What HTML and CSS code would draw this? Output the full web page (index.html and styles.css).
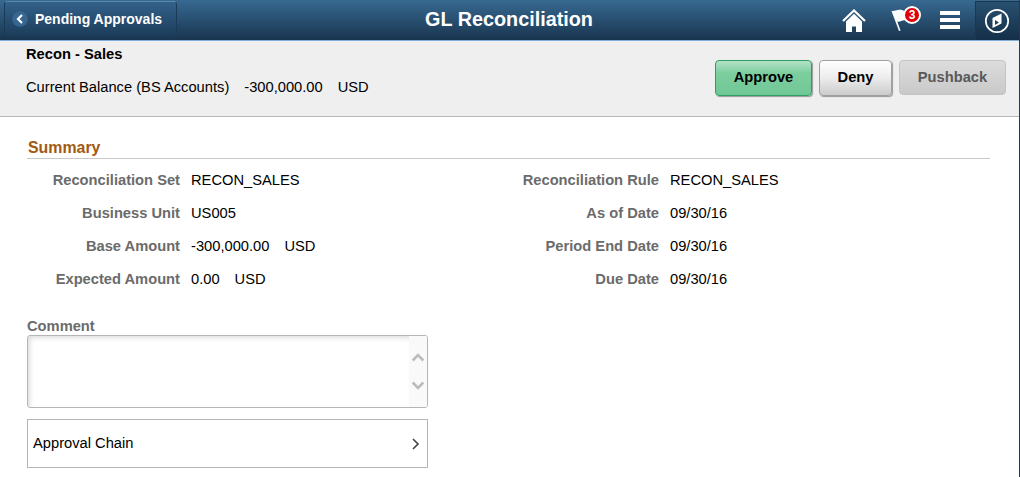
FILE: index.html
```html
<!DOCTYPE html>
<html lang="en">
<head>
    <meta charset="UTF-8">
    <meta name="viewport" content="width=device-width, initial-scale=1.0">
    <title>GL Reconciliation</title>
    <link rel="stylesheet" href="styles.css">
</head>
<body>
    <div class="page">
        <header class="banner">
            <button class="back-button">
                <svg class="back-icon" width="16" height="16" viewBox="0 0 16 16">
                    <circle cx="8" cy="8" r="7.8" fill="#376690"/>
                    <path d="M10 4 L6 8 L10 12" fill="none" stroke="#fff" stroke-width="2.2"/>
                </svg>
                <span>Pending Approvals</span>
            </button>
            <h1 class="title">GL Reconciliation</h1>
            <nav class="tools">
                <svg class="home-icon" width="24" height="24" viewBox="0 0 24 24">
                    <path d="M1 12 L12 1.5 L23 12" fill="none" stroke="#fff" stroke-width="2.2"/>
                    <path d="M4 12.5 L12 4.8 L20 12.5 V23 H14 V17.5 H10 V23 H4 Z" fill="#fff"/>
                </svg>
                <div class="alerts">
                    <svg width="20" height="24" viewBox="0 0 20 24">
                        <path d="M0.5 3 C4 3.5 6 1 11 2 L16 4 V13 C12 10.5 9 15 6.2 13.5 L9.6 22.5 L8 23 Z" fill="#fff"/>
                    </svg>
                    <span class="count">3</span>
                </div>
                <div class="menu">
                    <span class="bar"></span>
                    <span class="bar"></span>
                    <span class="bar"></span>
                </div>
                <div class="navbar-tile">
                    <svg width="26" height="26" viewBox="0 0 26 26">
                        <circle cx="13" cy="13" r="11.2" fill="none" stroke="#fff" stroke-width="1.7"/>
                        <path d="M8.5 10 L17.5 5.5 V15.5 L8.5 20 Z" fill="#fff"/>
                        <path d="M11 12 L15 14.5 L11 17 Z" fill="#1f4463"/>
                    </svg>
                </div>
            </nav>
        </header>

        <section class="subheader">
            <div class="info">
                <h2 class="name">Recon - Sales</h2>
                <p class="balance"><span>Current Balance (BS Accounts)</span><span>-300,000.00</span><span>USD</span></p>
            </div>
            <div class="actions">
                <button class="action approve">Approve</button>
                <button class="action deny">Deny</button>
                <button class="action pushback" disabled>Pushback</button>
            </div>
        </section>

        <main class="content">
            <h3 class="section-title">Summary</h3>
            <div class="summary">
                <dl class="fields">
                    <dt>Reconciliation Set</dt><dd>RECON_SALES</dd>
                    <dt>Business Unit</dt><dd>US005</dd>
                    <dt>Base Amount</dt><dd><span>-300,000.00</span><span>USD</span></dd>
                    <dt>Expected Amount</dt><dd><span>0.00</span><span>USD</span></dd>
                </dl>
                <dl class="fields">
                    <dt>Reconciliation Rule</dt><dd>RECON_SALES</dd>
                    <dt>As of Date</dt><dd>09/30/16</dd>
                    <dt>Period End Date</dt><dd>09/30/16</dd>
                    <dt>Due Date</dt><dd>09/30/16</dd>
                </dl>
            </div>

            <div class="comment-label">Comment</div>
            <div class="comment">
                <div class="comment-text"></div>
                <div class="scroller">
                    <svg width="12" height="9" viewBox="0 0 12 9"><path d="M0.7 7.5 L6 2.2 L11.3 7.5" fill="none" stroke="#bcbcbc" stroke-width="2.6"/></svg>
                    <svg width="12" height="9" viewBox="0 0 12 9"><path d="M0.7 1.5 L6 6.8 L11.3 1.5" fill="none" stroke="#bcbcbc" stroke-width="2.6"/></svg>
                </div>
            </div>

            <div class="chain">
                <span>Approval Chain</span>
                <svg width="8" height="12" viewBox="0 0 8 12"><path d="M1 1 L6 6 L1 11" fill="none" stroke="#444" stroke-width="1.6"/></svg>
            </div>
        </main>
    </div>
</body>
</html>
```
FILE: styles.css
```css
* {
    box-sizing: border-box;
}
body {
    margin: 0;
    font-family: "Liberation Sans", Arial, sans-serif;
    font-size: 14.7px;
    line-height: 17px;
    color: #000;
    background-color: #fff;
}
h1, h2, h3, p, dl, dd {
    margin: 0;
}
button {
    font-family: inherit;
    font-weight: bold;
}
.page {
    height: 477px;
    border-right: 1px solid #2b3555;
    overflow: hidden;
}

/* Banner */
.banner {
    display: grid;
    grid-template-columns: 1fr auto 1fr;
    height: 41px;
    background: linear-gradient(#376991, #19354f);
    border-bottom: 1px solid #7fadd9;
}
.back-button {
    display: flex;
    align-items: center;
    gap: 7px;
    width: 173px;
    height: 36px;
    margin: 1px 0 0 4px;
    padding: 0 0 0 7px;
    font-size: 14px;
    color: #fff;
    background: linear-gradient(#33618a, #1c3d5b);
    border: 1px solid #1a3b58;
    border-top-color: #5b87ab;
    border-radius: 4px;
    white-space: nowrap;
}
.title {
    padding-right: 1px;
    font-size: 19.8px;
    line-height: 38px;
    color: #fff;
}
.tools {
    display: flex;
    justify-content: flex-end;
}
.home-icon {
    margin: 9px 25px 0 0;
}
.alerts {
    position: relative;
    width: 30px;
    margin-right: 19px;
    padding-top: 8px;
}
.count {
    position: absolute;
    top: 6px;
    left: 12px;
    width: 18px;
    height: 18px;
    border: 2px solid #fff;
    border-radius: 50%;
    background-color: #e00008;
    color: #fff;
    font-size: 12px;
    font-weight: bold;
    line-height: 14px;
    text-align: center;
}
.menu {
    display: flex;
    flex-direction: column;
    gap: 3px;
    width: 20px;
    margin: 11px 15px 0 0;
}
.bar {
    height: 4px;
    background-color: #fff;
}
.navbar-tile {
    width: 44px;
    height: 39px;
    margin-top: 1px;
    padding: 6px 0 0 8px;
    background: linear-gradient(#28506f, #142f48);
    border-left: 1px solid #1a3852;
    border-top: 1px solid #1a3852;
}

/* Transaction header */
.subheader {
    display: flex;
    justify-content: space-between;
    height: 76px;
    padding: 0 13px 0 26px;
    background-color: #efefef;
    border-bottom: 1px solid #b9b9b9;
}
.name {
    margin-top: 5px;
    font-size: 14.7px;
}
.balance {
    display: flex;
    gap: 15px;
    margin-top: 16px;
}
.actions {
    display: flex;
    gap: 7px;
    padding-top: 19px;
}
.action {
    height: 36px;
    padding: 0 0 3px;
    font-size: 14.7px;
    color: #000;
    border-radius: 4px;
}
.approve {
    width: 97px;
    background: linear-gradient(#b5e2c8, #7dce9f 35%, #70c795);
    border: 1px solid #2f9e62;
    box-shadow: 1px 1px 1px #999;
}
.deny {
    width: 73px;
    background: linear-gradient(#fff, #ececec 50%, #cbcbcb);
    border: 1px solid #a0a0a0;
    box-shadow: 1px 1px 1px #999;
}
.pushback {
    width: 107px;
    height: 35px;
    padding-bottom: 1px;
    color: #595959;
    background: linear-gradient(#dcdcdc, #c9c9c9);
    border: 1px solid #c4c4c4;
}

/* Page content */
.content {
    padding: 22px 29px 0 27px;
}
.section-title {
    height: 20px;
    padding-left: 1px;
    font-size: 15.9px;
    color: #a15a10;
    border-bottom: 1px solid #c8c8c8;
}
.summary {
    display: grid;
    grid-template-columns: 479px 1fr;
    margin-top: 5px;
}
.fields {
    display: grid;
    grid-template-columns: 153px 1fr;
    column-gap: 11px;
    line-height: 33px;
}
.fields dt {
    font-weight: bold;
    text-align: right;
    color: #6b6b6b;
}
.fields dd {
    display: flex;
    gap: 15px;
}
.comment-label {
    margin-top: 22px;
    font-weight: bold;
    color: #6b6b6b;
}
.comment {
    display: flex;
    width: 401px;
    height: 73px;
    border: 1px solid #b5b5b5;
    border-radius: 3px;
    overflow: hidden;
}
.comment-text {
    flex: 1;
    box-shadow: inset 3px 3px 5px -1px #ddd;
}
.scroller {
    display: flex;
    flex-direction: column;
    align-items: center;
    gap: 19px;
    width: 18px;
    padding: 17px 1px 0 0;
    background-color: #f9f9f9;
}
.chain {
    display: flex;
    align-items: center;
    justify-content: space-between;
    width: 401px;
    height: 49px;
    margin-top: 11px;
    padding: 0 7px 0 5px;
    border: 1px solid #b5b5b5;
}
```
